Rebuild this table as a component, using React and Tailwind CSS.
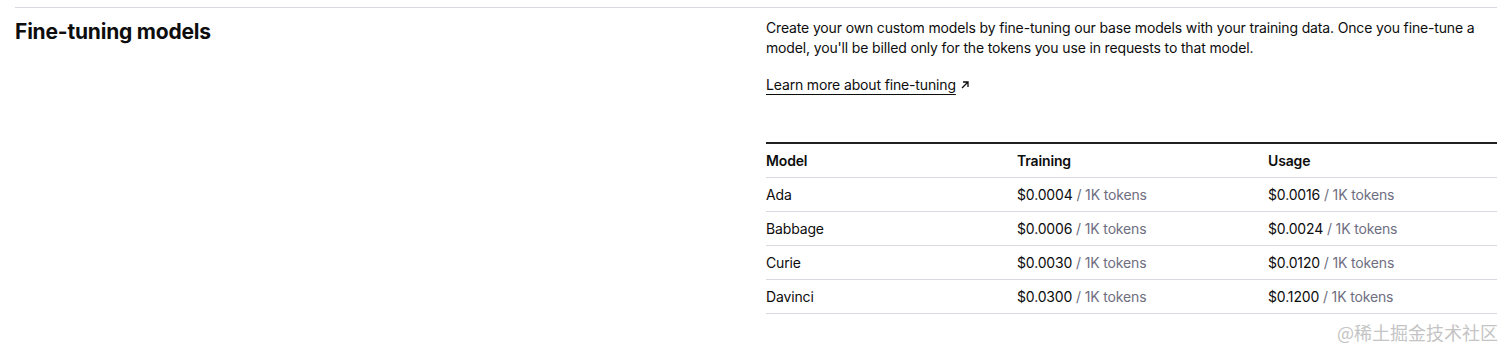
import React from 'react';

const rows = [
  { model: 'Ada', training: '$0.0004', usage: '$0.0016' },
  { model: 'Babbage', training: '$0.0006', usage: '$0.0024' },
  { model: 'Curie', training: '$0.0030', usage: '$0.0120' },
  { model: 'Davinci', training: '$0.0300', usage: '$0.1200' },
];

const Price = ({ value }) => (
  <span>
    {value} <span className="text-[#6e6e80]">/ 1K tokens</span>
  </span>
);

const App = () => {
  return (
    <div
      className="relative h-[357px] w-full bg-white px-[15px] pt-[7px] text-[#0d0d0d]"
      style={{ fontFamily: 'Inter, "Noto Sans", sans-serif' }}
    >
      <div className="border-t border-[#d9d9e3]">
        <div className="grid grid-cols-[751px_1fr] pt-[10px]">
          {/* ── Left: section title ── */}
          <h2 className="text-[21px] font-bold leading-[28px] tracking-[-0.2px]">
            Fine-tuning models
          </h2>

          {/* ── Right: description + pricing table ── */}
          <div className="text-[14px] leading-[20px] tracking-[-0.15px]">
            <p>
              Create your own custom models by fine-tuning our base models with your training data. Once you fine-tune a
              model, you'll be billed only for the tokens you use in requests to that model.
            </p>

            <a href="#" className="mt-[17px] inline-flex items-center gap-[3px]">
              <span className="underline decoration-1 underline-offset-[4px]">Learn more about fine-tuning</span>
              <svg width="12" height="12" viewBox="0 0 12 12" fill="none" stroke="currentColor" strokeWidth="1.3">
                <path d="M3 9 L9 3 M4 3 H9 V8" />
              </svg>
            </a>

            <div className="mt-[47px] border-t-2 border-[#202123]">
              <div className="grid grid-cols-[251px_251px_1fr] border-b border-[#d9d9e3] h-[34px] items-center font-semibold">
                <div>Model</div>
                <div>Training</div>
                <div>Usage</div>
              </div>
              {rows.map((r) => (
                <div
                  key={r.model}
                  className="grid grid-cols-[251px_251px_1fr] border-b border-[#d9d9e3] h-[34px] items-center"
                >
                  <div>{r.model}</div>
                  <Price value={r.training} />
                  <Price value={r.usage} />
                </div>
              ))}
            </div>
          </div>
        </div>
      </div>

      {/* watermark */}
      <div
        className="absolute right-[14px] bottom-[13px] text-[18px] leading-[24px] text-[#c4c4c4]"
        style={{ fontFamily: '"Noto Sans CJK SC", sans-serif' }}
      >
        @稀土掘金技术社区
      </div>
    </div>
  );
};

export default App;
